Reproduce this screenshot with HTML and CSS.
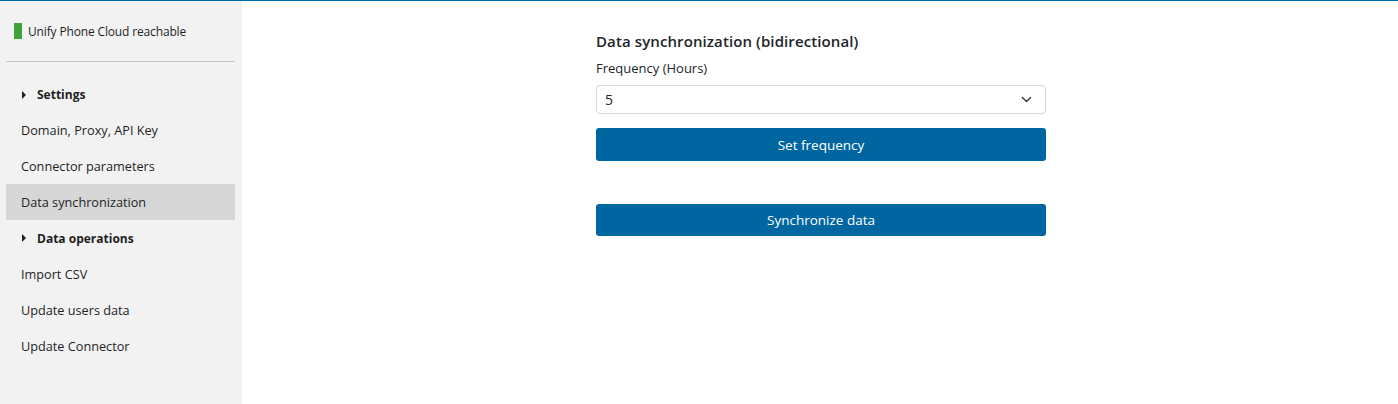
FILE: index.html
```html
<!DOCTYPE html>
<html lang="en">
<head>
    <meta charset="UTF-8">
    <meta name="viewport" content="width=device-width, initial-scale=1.0">
    <title>Connector</title>
    <link rel="stylesheet" href="styles.css">
</head>
<body>
    <div class="layout">
        <div class="sidebar">
            <div class="status">
                <span class="status-led"></span>
                <span class="status-text">Unify Phone Cloud reachable</span>
            </div>
            <hr class="divider">
            <div class="nav">
                <div class="nav-group"><span class="caret"></span>Settings</div>
                <a class="nav-item" href="#">Domain, Proxy, API Key</a>
                <a class="nav-item" href="#">Connector parameters</a>
                <a class="nav-item active" href="#">Data synchronization</a>
                <div class="nav-group"><span class="caret"></span>Data operations</div>
                <a class="nav-item" href="#">Import CSV</a>
                <a class="nav-item" href="#">Update users data</a>
                <a class="nav-item" href="#">Update Connector</a>
            </div>
        </div>
        <div class="main">
            <div class="panel">
                <h2 class="panel-title">Data synchronization (bidirectional)</h2>
                <label class="field-label" for="frequency">Frequency (Hours)</label>
                <div class="select-wrap">
                    <select class="select" id="frequency">
                        <option>1</option>
                        <option>2</option>
                        <option>3</option>
                        <option>4</option>
                        <option selected>5</option>
                        <option>6</option>
                        <option>12</option>
                        <option>24</option>
                    </select>
                    <svg class="chevron" width="11" height="11" viewBox="0 0 16 16">
                        <path d="M2 5l6 6 6-6" fill="none" stroke="#343a40" stroke-width="2" stroke-linecap="round" stroke-linejoin="round"/>
                    </svg>
                </div>
                <button class="btn" type="button">Set frequency</button>
                <button class="btn btn-sync" type="button">Synchronize data</button>
            </div>
        </div>
    </div>
</body>
</html>
```

FILE: styles.css
```css
html, body {
    width: 100%;
    height: 100%;
    margin: 0;
    padding: 0;
}
body {
    font-family: "Open Sans", "Noto Sans", sans-serif;
    color: #212529;
    background-color: #ffffff;
    border-top: 1px solid #0066a0;
    box-sizing: border-box;
}
.layout {
    display: flex;
    height: 100%;
}
.sidebar {
    width: 242px;
    flex-shrink: 0;
    background-color: #f2f2f2;
    padding: 0 7px 0 6px;
    box-sizing: border-box;
}
.status {
    display: flex;
    align-items: center;
    height: 16px;
    margin-top: 22px;
    padding-left: 8px;
}
.status-led {
    width: 8px;
    height: 16px;
    background-color: #3fa33b;
    margin-right: 6px;
}
.status-text {
    font-size: 12px;
    color: #1f1f1f;
    letter-spacing: -0.15px;
}
.divider {
    border: none;
    border-top: 1px solid #c6c6c6;
    margin: 22px 0 0 0;
}
.nav {
    display: flex;
    flex-direction: column;
    margin-top: 15px;
}
.nav-group {
    display: flex;
    align-items: center;
    height: 36px;
    padding-left: 16px;
    font-size: 12px;
    font-weight: 700;
    color: #1f1f1f;
}
.nav-group:first-child {
    height: 35px;
}
.caret {
    width: 0;
    height: 0;
    border-top: 4px solid transparent;
    border-bottom: 4px solid transparent;
    border-left: 4px solid #1f1f1f;
    margin-right: 11px;
}
.nav-item {
    display: flex;
    align-items: center;
    height: 36px;
    padding-left: 15px;
    font-size: 12.7px;
    color: #1f1f1f;
    text-decoration: none;
}
.nav-item.active {
    background-color: #d7d7d7;
}
.main {
    flex: 1;
    display: flex;
    justify-content: center;
    padding-left: 2px;
}
.panel {
    width: 450px;
    margin-top: 30px;
    display: flex;
    flex-direction: column;
}
.panel-title {
    font-size: 15px;
    font-weight: 600;
    margin: 0;
    line-height: 21px;
    letter-spacing: 0.1px;
}
.field-label {
    font-size: 13px;
    margin-top: 7px;
    line-height: 18px;
}
.select-wrap {
    position: relative;
    margin-top: 8px;
}
.select {
    appearance: none;
    -webkit-appearance: none;
    width: 100%;
    height: 29px;
    padding: 0 8px;
    font-family: inherit;
    font-size: 14px;
    color: #212529;
    background-color: #ffffff;
    border: 1px solid #d3d6da;
    border-radius: 4px;
    box-sizing: border-box;
}
.chevron {
    position: absolute;
    right: 14px;
    top: 9px;
    pointer-events: none;
}
.btn {
    height: 33px;
    margin-top: 14px;
    border: none;
    border-radius: 3px;
    background-color: #0066a1;
    color: #ffffff;
    font-family: inherit;
    font-size: 13.5px;
}
.btn-sync {
    margin-top: 43px;
    height: 32px;
}
```
